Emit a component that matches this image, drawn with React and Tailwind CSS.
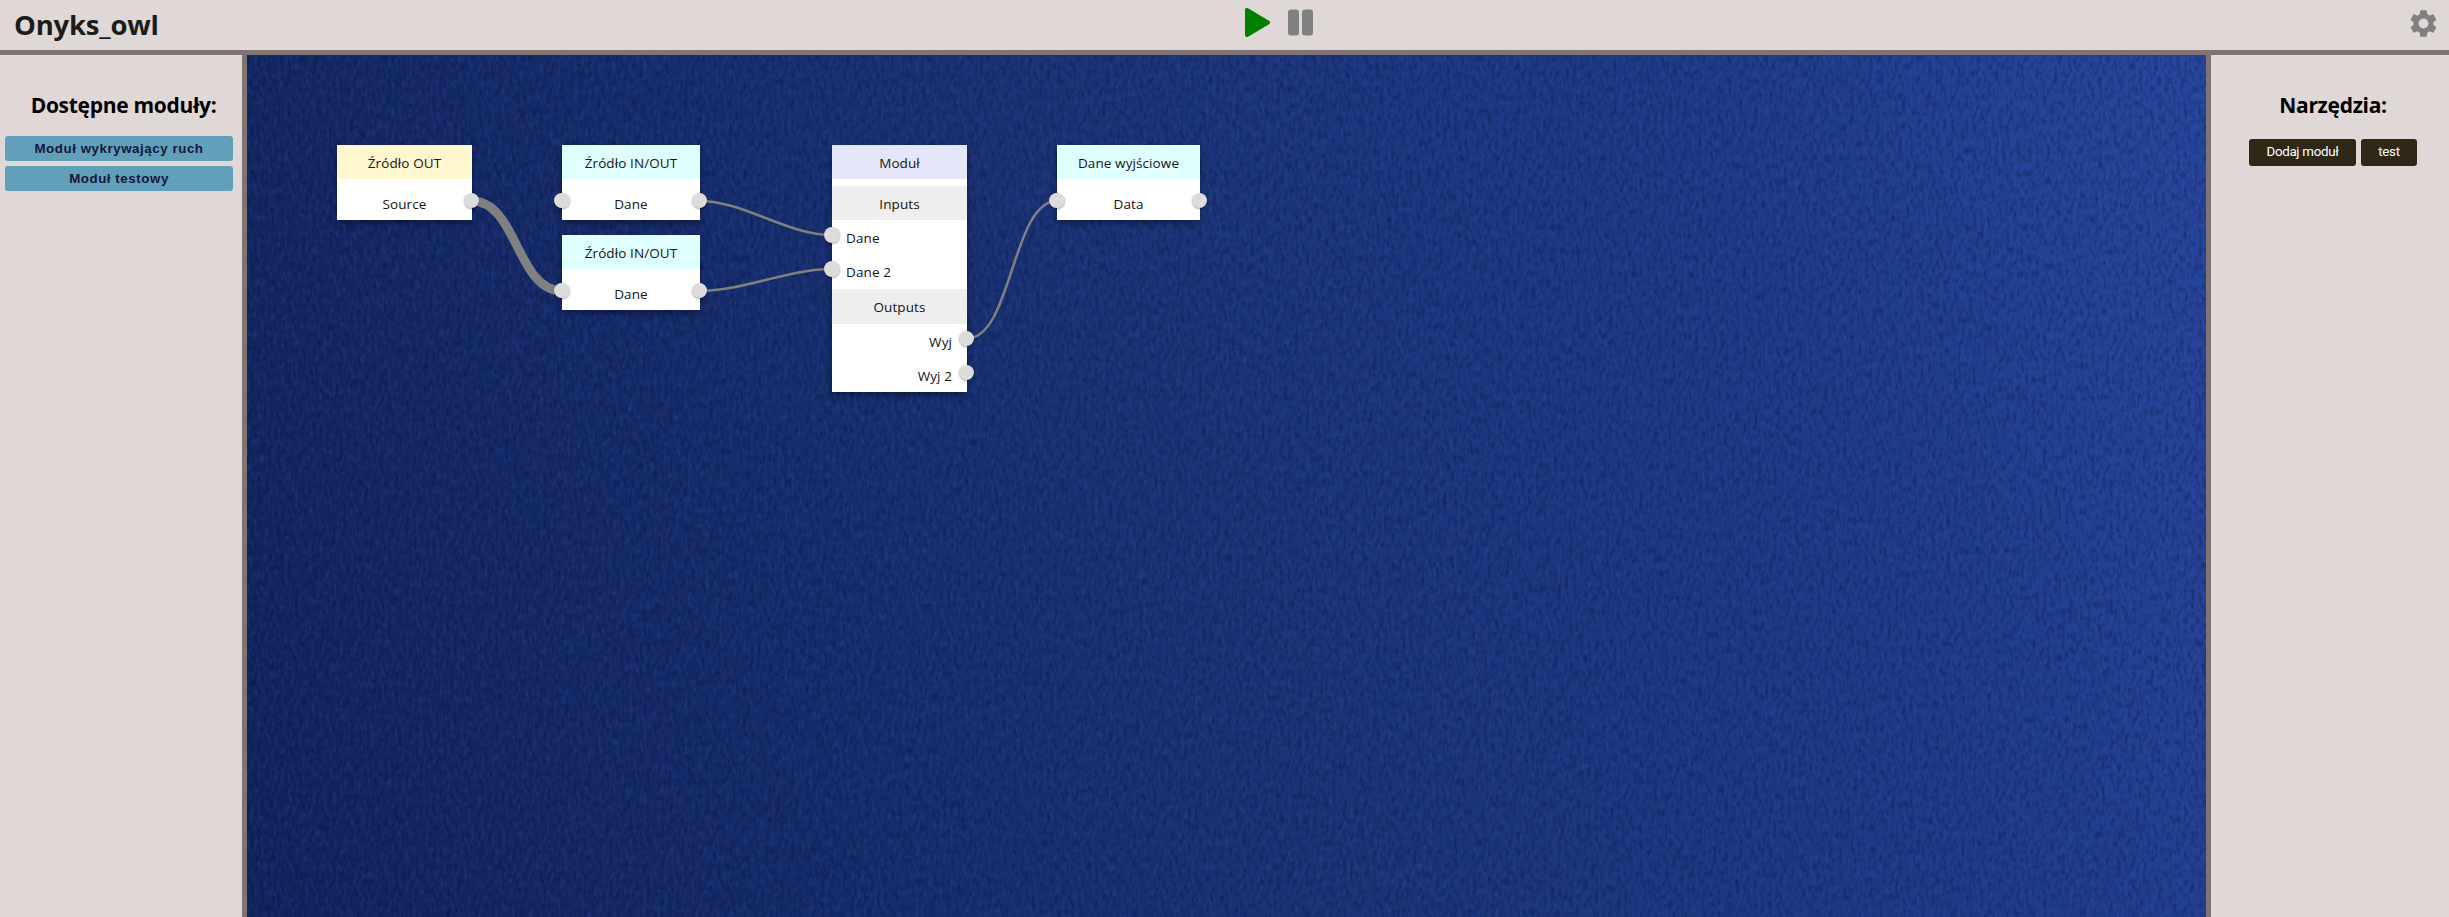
import React from "react";
import { MdSettings } from "react-icons/md";

const UI = "font-['Open_Sans','Noto_Sans',sans-serif]";

function Port({ className }) {
  return (
    <span
      className={`absolute size-[15.5px] rounded-full bg-[#dcdcdc] shadow-[0_1px_2px_rgba(0,0,0,0.35)] ${className}`}
    />
  );
}

function Node({ place, head, title, children }) {
  return (
    <div className={`absolute flex flex-col bg-white text-center shadow-[0_3px_6px_rgba(0,0,0,0.4)] ${place}`}>
      <div className={`h-[34px] shrink-0 pt-px leading-[35px] ${head}`}>{title}</div>
      {children}
    </div>
  );
}

function Simple({ label, left, right }) {
  return (
    <div className="relative h-[41px] pt-[8px] leading-[35px]">
      {left && <Port className="-left-2 top-[13.5px]" />}
      {label}
      {right && <Port className="-right-[7px] top-[13.5px]" />}
    </div>
  );
}

function Row({ label, out }) {
  return (
    <div className={`relative h-[34.33px] pr-[15px] pl-[14px] pt-px leading-[35px] ${out ? "text-right" : "text-left"}`}>
      <Port className={out ? "-right-[7px] top-[7px]" : "-left-2 top-[7px]"} />
      {label}
    </div>
  );
}

function Canvas() {
  return (
    <main className="relative min-w-0 flex-1 overflow-hidden bg-[linear-gradient(71deg,#10225b_0%,#152a67_25%,#1b3375_50%,#1f3b88_78%,#27469d_100%)]">
      <svg className="absolute inset-0 size-full" aria-hidden="true">
        <filter id="felt" x="0" y="0" width="100%" height="100%" colorInterpolationFilters="sRGB">
          <feTurbulence type="fractalNoise" baseFrequency="0.27 0.13" numOctaves="3" seed="4" />
          <feColorMatrix values="0 0 0 0 0.02  0 0 0 0 0.06  0 0 0 0 0.22  0.9 0 0 0 -0.37" />
        </filter>
        <filter id="fibre" x="0" y="0" width="100%" height="100%" colorInterpolationFilters="sRGB">
          <feTurbulence type="fractalNoise" baseFrequency="0.29 0.12" numOctaves="3" seed="19" />
          <feColorMatrix values="0 0 0 0 0.18  0 0 0 0 0.33  0 0 0 0 0.72  0.65 0 0 0 -0.28" />
        </filter>
        <rect width="100%" height="100%" filter="url(#felt)" />
        <rect width="100%" height="100%" filter="url(#fibre)" />
      </svg>
      <svg className="absolute inset-0 size-full" fill="none" stroke="#808080" strokeWidth="2.5" aria-hidden="true">
        <path d="M225 146C270 146 270 236 315 236" strokeWidth="9" />
        <path d="M452 146C497 146 540 180 585 180" />
        <path d="M452 236C497 236 540 214 585 214" />
        <path d="M720 283.500C765 283.500 765 146 810 146" />
      </svg>
      <div className="text-[13.5px] tracking-[0.1px] text-[#141414]">
        <Node place="left-[90px] top-[90px] w-[135px]" head="bg-[#fff8cf]" title="Źródło OUT">
          <Simple label="Source" right />
        </Node>
        <Node place="left-[315px] top-[90px] w-[138px]" head="bg-[#e0ffff]" title="Źródło IN/OUT">
          <Simple label="Dane" left right />
        </Node>
        <Node place="left-[315px] top-[180px] w-[138px]" head="bg-[#e0ffff]" title="Źródło IN/OUT">
          <Simple label="Dane" left right />
        </Node>
        <Node place="left-[585px] top-[90px] w-[135px]" head="bg-[#e6e6fa]" title="Moduł">
          <div className="mt-[7px] h-[34px] bg-[#eeeeee] pt-px leading-[35px]">Inputs</div>
          <Row label="Dane" />
          <Row label="Dane 2" />
          <div className="h-[35px] bg-[#eeeeee] pt-px leading-[34px]">Outputs</div>
          <Row label="Wyj" out />
          <Row label="Wyj 2" out />
        </Node>
        <Node place="left-[810px] top-[90px] w-[143px]" head="bg-[#e0ffff]" title="Dane wyjściowe">
          <Simple label="Data" left right />
        </Node>
      </div>
    </main>
  );
}

function ModuleButton({ children }) {
  return (
    <button className="h-[25px] rounded-[3px] bg-[#61a0bb] pt-px font-['Liberation_Sans',Arial,sans-serif] text-[13.33px] font-bold tracking-[0.55px] text-[#16163a]">
      {children}
    </button>
  );
}

export default function App() {
  return (
    <div className={`flex h-[917px] w-[2449px] flex-col overflow-hidden bg-[#e0d8d6] ${UI}`}>
      <header className="flex h-[55px] shrink-0 items-center border-b-[5px] border-[#807371]">
        <div className="w-[1245px] pl-[14px]">
          <h1 className="text-[27.5px] leading-[50px] font-bold tracking-[-0.2px] text-[#1c1c1c]">Onyks_owl</h1>
        </div>
        <div className="flex gap-[18px] pb-[5px]">
          <svg className="h-[29px] w-[25px]" viewBox="0 0 25 29" aria-label="Start">
            <path d="M2 2V27L23 14.500Z" fill="#008000" stroke="#008000" strokeWidth="4" strokeLinejoin="round" />
          </svg>
          <svg className="h-[29px] w-[25px]" viewBox="0 0 25 29" fill="#808080" aria-label="Pause">
            <rect x="0" y="1.500" width="11" height="26" rx="3" />
            <rect x="14" y="1.500" width="11" height="26" rx="3" />
          </svg>
        </div>
        <div className="flex flex-1 justify-end pr-[9px] pb-[4px]">
          <MdSettings className="size-[33px] text-[#808080]" />
        </div>
      </header>
      <div className="flex min-h-0 flex-1">
        <aside className="flex w-[247px] shrink-0 flex-col border-r-[5px] border-[#807371] pt-[35px]">
          <h2 className="pl-[5px] text-center text-[21px] leading-[30px] font-bold tracking-[-0.3px] text-black">Dostępne moduły:</h2>
          <div className="mt-[16px] flex flex-col gap-[5px] pr-[9px] pl-[5px]">
            <ModuleButton>Moduł wykrywający ruch</ModuleButton>
            <ModuleButton>Moduł testowy</ModuleButton>
          </div>
        </aside>
        <Canvas />
        <aside className="flex w-[243px] shrink-0 flex-col border-l-[5px] border-[#807371] pt-[35px]">
          <h2 className="pl-[6px] text-center text-[21px] leading-[30px] font-bold tracking-[-0.3px] text-black">Narzędzia:</h2>
          <div className="mt-[19px] flex gap-[5px] pl-[38px] font-[Roboto,sans-serif] text-[13.33px] tracking-[-0.3px] text-white">
            <button className="h-[27px] w-[107px] rounded-[3px] bg-[#2f2816] pb-[2px]">Dodaj moduł</button>
            <button className="h-[27px] w-[56px] rounded-[3px] bg-[#2f2816] pb-[2px]">test</button>
          </div>
        </aside>
      </div>
    </div>
  );
}
